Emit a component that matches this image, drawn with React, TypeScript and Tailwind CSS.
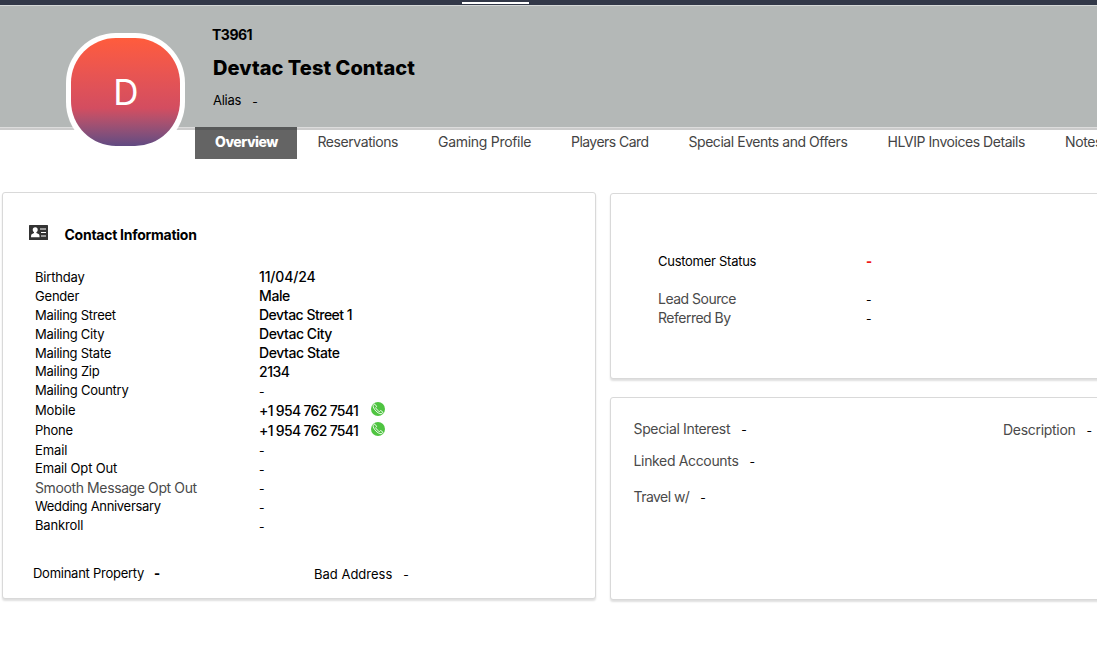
type Field = {
  label: string;
  value?: string;
  labelClass: string;
  valueClass?: string;
  rowClass?: string;
  phone?: boolean;
};

const tabs = [
  { label: "Reservations", cls: "w-[120.5px] tracking-[-0.43px]" },
  { label: "Gaming Profile", cls: "w-[133px] tracking-[-0.29px]" },
  { label: "Players Card", cls: "w-[117.5px] tracking-[-0.54px]" },
  { label: "Special Events and Offers", cls: "w-[199px] tracking-[-0.45px]" },
  { label: "HLVIP Invoices Details", cls: "w-[177.5px] tracking-[-0.45px]" },
  { label: "Notes", cls: "w-[60px] tracking-[-0.4px]" },
];

const fields: Field[] = [
  { label: "Birthday", value: "11/04/24", labelClass: "pt-0.5 tracking-[-0.18px]", valueClass: "tracking-[-0.15px]" },
  { label: "Gender", value: "Male", labelClass: "pt-0.5 tracking-[-0.2px]", valueClass: "tracking-[-0.4px]" },
  { label: "Mailing Street", value: "Devtac Street 1", labelClass: "pt-0.5 tracking-[-0.26px]", valueClass: "tracking-[-0.5px]" },
  { label: "Mailing City", value: "Devtac City", labelClass: "pt-0.5 tracking-[-0.25px]", valueClass: "tracking-[-0.44px]" },
  { label: "Mailing State", value: "Devtac State", labelClass: "pt-0.5 tracking-[-0.26px]", valueClass: "tracking-[-0.42px]" },
  { label: "Mailing Zip", value: "2134", labelClass: "tracking-[-0.24px]", valueClass: "tracking-[-0.45px]" },
  { label: "Mailing Country", labelClass: "tracking-[-0.24px]" },
  { label: "Mobile", value: "+1 954 762 7541", labelClass: "pt-0.5 tracking-[-0.15px]", valueClass: "tracking-[-0.69px]", rowClass: "h-5", phone: true },
  { label: "Phone", value: "+1 954 762 7541", labelClass: "pt-0.5 tracking-[-0.25px]", valueClass: "tracking-[-0.69px]", rowClass: "h-5", phone: true },
  { label: "Email", labelClass: "pt-0.5 tracking-[-0.1px]" },
  { label: "Email Opt Out", labelClass: "tracking-[-0.15px]" },
  { label: "Smooth Message Opt Out", labelClass: "text-sm text-[#4a4a4a] tracking-[-0.39px]" },
  { label: "Wedding Anniversary", labelClass: "tracking-[-0.31px]" },
  { label: "Bankroll", labelClass: "tracking-[-0.15px]" },
];

function ContactCardIcon() {
  return (
    <svg width="19" height="15" viewBox="0 0 19 15" className="shrink-0">
      <rect width="19" height="15" rx="0.5" fill="#333" />
      <circle cx="6.2" cy="4.8" r="2.5" fill="#fff" />
      <path d="M5 6.500h2.400v1.600l2.600 1.200q.6.4.6 2.900H2q0-2.500.6-2.900L5 8.100z" fill="#fff" />
      <path d="M11 4h6M12 7.500h5M12 11h5" stroke="#fff" strokeWidth="1.2" />
    </svg>
  );
}

function CallIcon() {
  return (
    <svg width="14" height="14" viewBox="0 0 14 14" className="mb-0.5 shrink-0">
      <circle cx="7" cy="7" r="7" fill="#4fc441" />
      <path
        d="M3.100 2.300 2.200 3.500C1.800 6.500 6.600 11.900 10.200 11.700l1.500-1c.3-.3.2-.6-.1-.9L9.900 8.700c-.4-.2-.7-.1-.9.2l-.5.6C7.100 9.100 5.200 7 4.700 5.600l.6-.6c.3-.3.3-.6.1-.9L4.100 2.400c-.3-.3-.7-.4-1-.1z"
        fill="none"
        stroke="#fff"
        strokeWidth="0.9"
      />
    </svg>
  );
}

const cardClass = "rounded-[3px] border border-[#d9d9d9] bg-white shadow-[0_2px_2px_rgba(0,0,0,0.13)]";

function Dash({ className = "" }: { className?: string }) {
  return <span className={"text-xs leading-none text-black " + className}>-</span>;
}

export default function App() {
  return (
    <div className="h-[662px] w-full overflow-hidden bg-white font-['Inter',sans-serif] text-[13px] whitespace-nowrap text-black">
      <div className="h-[5px] bg-[#323848] pt-0.5 pl-[462px]">
        <div className="h-0.5 w-[67px] bg-white" />
      </div>
      <header className="flex h-[122px] border-t border-[#d5d8d7] bg-[#b4b8b7]">
        <div className="z-10 mt-[27px] ml-[66px] flex h-[119px] w-[119px] shrink-0 rounded-[50px] bg-white p-[5px]">
          <div className="flex h-[108px] w-full items-center justify-center rounded-[45px] bg-linear-to-b from-[#ff5c3c] via-[#d34d60] via-65% to-[#614a82] pl-px text-[35px] leading-none font-normal text-white">
            D
          </div>
        </div>
        <div className="ml-[27px] flex flex-col pt-[19px]">
          <p className="h-5 text-sm leading-5 font-bold tracking-[-0.5px]">T3961</p>
          <h1 className="mt-[9px] h-7 pl-px text-[20px] leading-7 font-extrabold tracking-[0.04px]">Devtac Test Contact</h1>
          <p className="mt-[9px] flex h-5 items-center gap-[11px] pl-px">
            <span className="tracking-[-0.25px]">Alias</span>
            <Dash className="pt-0.5" />
          </p>
        </div>
      </header>
      <nav className="flex h-8 pl-[195px] text-sm text-[#444] shadow-[inset_0_1px_0_#dcdcdc,inset_0_3px_0_#cbcbcb]">
        <div className="mr-[20.500px] flex h-8 w-[102px] shrink-0 justify-center border-t-[3px] border-[#575959] bg-[#646464] pt-0.5 pl-px leading-5 font-extrabold tracking-[-0.48px] text-white">
          Overview
        </div>
        {tabs.map((t) => (
          <div key={t.label} className={"shrink-0 pt-[5px] leading-5 " + t.cls}>
            {t.label}
          </div>
        ))}
      </nav>

      <main className="flex items-start gap-[14px] pt-[33px] pl-0.5">
        <section className={"flex h-[407px] w-[594px] shrink-0 flex-col " + cardClass}>
          <div className="mt-8 flex h-5 items-start pl-[25.500px]">
            <ContactCardIcon />
            <h2 className="ml-[17px] text-sm leading-5 font-bold tracking-[-0.26px]">Contact Information</h2>
          </div>
          <dl className="mt-[22px] flex flex-col pl-8">
            {fields.map((f) => (
              <div key={f.label} className={"flex items-center " + (f.rowClass ?? "h-[19px]")}>
                <dt className={"w-56 shrink-0 " + f.labelClass}>{f.label}</dt>
                <dd className="flex items-center">
                  {f.value ? (
                    <span className={"text-sm leading-5 font-medium " + (f.phone ? "w-[112px] pt-px " : "") + (f.valueClass ?? "")}>{f.value}</span>
                  ) : (
                    <Dash className="pt-0.5" />
                  )}
                  {f.phone && <CallIcon />}
                </dd>
              </div>
            ))}
          </dl>
          <div className="mt-[29px] flex h-5 items-center pl-[30px]">
            <div className="flex w-[281px] items-center gap-[10px]">
              <span className="tracking-[-0.26px]">Dominant Property</span>
              <span className="font-extrabold">-</span>
            </div>
            <div className="flex items-center gap-[11px] pt-px">
              <span>Bad Address</span>
              <Dash />
            </div>
          </div>
        </section>

        <div className="flex w-[520px] shrink-0 flex-col gap-[18px] pt-px">
          <section className={"flex h-[186px] flex-col pt-[58px] pl-[47px] " + cardClass}>
            <div className="flex h-5 items-center">
              <span className="w-[208px] tracking-[-0.27px]">Customer Status</span>
              <span className="font-extrabold text-[#f01818]">-</span>
            </div>
            <div className="mt-[17px] flex h-[19px] items-center">
              <span className="w-[208px] text-sm tracking-[-0.5px] text-[#4a4a4a]">Lead Source</span>
              <Dash className="pt-0.5" />
            </div>
            <div className="flex h-[19px] items-center">
              <span className="w-[208px] text-sm tracking-[-0.5px] text-[#4a4a4a]">Referred By</span>
              <Dash className="pt-0.5" />
            </div>
          </section>

          <section className={"flex h-[203px] items-start pl-[22.500px] text-sm text-[#4a4a4a] " + cardClass}>
            <div className="flex w-[369.500px] shrink-0 flex-col pt-[21px]">
              <div className="flex h-5 items-center gap-[11px]">
                <span className="tracking-[-0.34px]">Special Interest</span>
                <Dash className="pt-0.5" />
              </div>
              <div className="mt-3 flex h-5 items-center gap-[11px]">
                <span className="tracking-[-0.34px]">Linked Accounts</span>
                <Dash className="pt-0.5" />
              </div>
              <div className="mt-4 flex h-5 items-center gap-[11px]">
                <span className="tracking-[-0.55px]">Travel w/</span>
                <Dash className="pt-0.5" />
              </div>
            </div>
            <div className="mt-[22px] flex h-5 items-center gap-[11px]">
              <span className="tracking-[-0.3px]">Description</span>
              <Dash className="pt-0.5" />
            </div>
          </section>
        </div>
      </main>
    </div>
  );
}
